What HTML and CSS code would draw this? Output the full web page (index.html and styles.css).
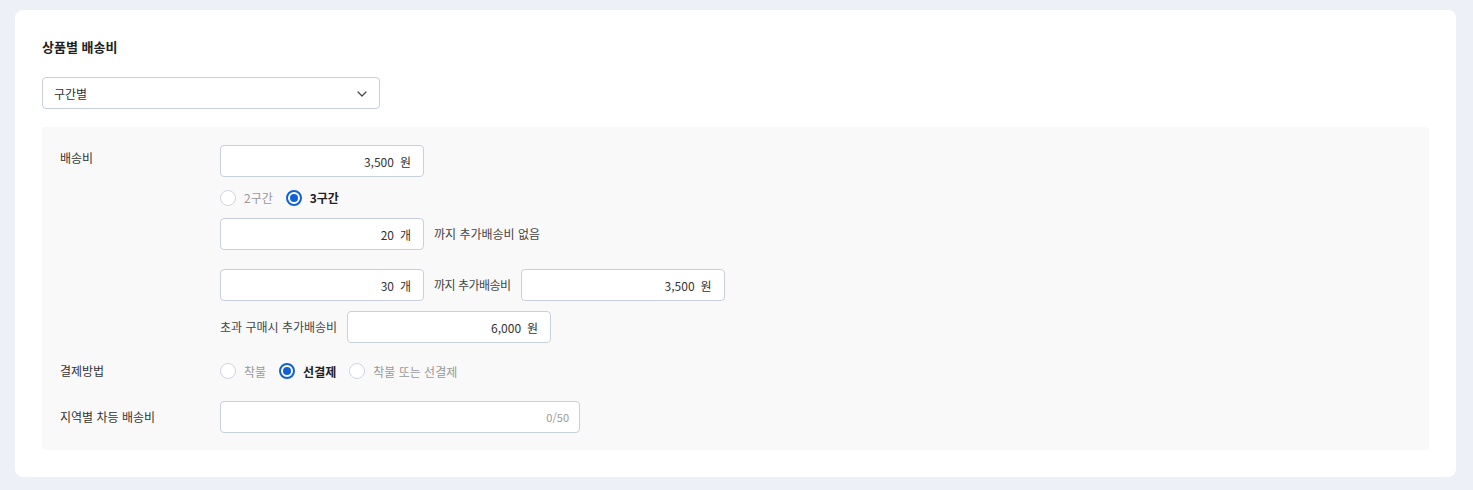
FILE: index.html
```html
<!DOCTYPE html>
<html lang="ko">
<head>
<meta charset="utf-8">
<link rel="stylesheet" href="styles.css">
</head>
<body>
<section class="card">
  <h2 class="title">상품별 배송비</h2>
  <div class="select">
    <span>구간별</span>
    <svg class="chev" width="10" height="6" viewBox="0 0 10 6"><path d="M1 1l4 4 4-4" fill="none" stroke="#444" stroke-width="1.2" stroke-linecap="round" stroke-linejoin="round"/></svg>
  </div>
  <div class="panel">
    <div class="label l1">배송비</div>
    <div class="col">
      <div class="input"><span>3,500</span><span class="unit">원</span></div>
      <div class="radios">
        <label class="radio"><span class="dot"></span><span class="off">2구간</span></label>
        <label class="radio"><span class="dot on"></span><span class="sel">3구간</span></label>
      </div>
      <div class="line">
        <div class="input"><span>20</span><span class="unit">개</span></div>
        <span class="txt">까지 추가배송비 없음</span>
      </div>
      <div class="line gap2">
        <div class="input"><span>30</span><span class="unit">개</span></div>
        <span class="txt tight">까지 추가배송비</span>
        <div class="input"><span>3,500</span><span class="unit">원</span></div>
      </div>
      <div class="line">
        <span class="txt">초과 구매시 추가배송비</span>
        <div class="input"><span>6,000</span><span class="unit">원</span></div>
      </div>
    </div>
    <div class="label l2">결제방법</div>
    <div class="radios pay">
      <label class="radio"><span class="dot"></span><span class="off">착불</span></label>
      <label class="radio"><span class="dot on"></span><span class="sel">선결제</span></label>
      <label class="radio"><span class="dot"></span><span class="off">착불 또는 선결제</span></label>
    </div>
    <div class="label l3">지역별 차등 배송비</div>
    <div class="input wide"><span class="count">0/50</span></div>
  </div>
</section>
</body>
</html>
```
FILE: styles.css
```css
* { box-sizing: border-box; }
html, body { margin: 0; padding: 0; }
body {
  background: #edf0f7;
  font-family: "Noto Sans CJK KR", "Noto Sans", sans-serif;
  color: #333;
  font-size: 12px;
  padding: 10px 17px 13px 15px;
}
.card {
  background: #fff;
  border-radius: 8px;
  padding: 28px 27px 27px 27px;
  height: 467px;
}
.title {
  margin: 0;
  font-size: 13px;
  font-weight: 700;
  color: #222;
  line-height: 18px;
}
.select {
  margin-top: 21px;
  width: 338px;
  height: 32px;
  border: 1px solid #c8d0dd;
  border-radius: 4px;
  display: flex;
  align-items: center;
  justify-content: space-between;
  padding: 0 12px 0 11px;
  color: #333;
  font-size: 12px;
}
.chev { margin-top: 1px; }
.panel {
  margin-top: 18px;
  background: #f9f9fa;
  border-radius: 4px;
  padding: 18px 18px 17px 18px;
  display: grid;
  grid-template-columns: 160px 1fr;
  row-gap: 18px;
}
.label { color: #333; line-height: 18px; }
.l1 { padding-top: 4px; }
.l2 { align-self: center; }
.l3 { align-self: center; margin-top: 2px; }
.col { display: flex; flex-direction: column; align-items: flex-start; gap: 10px; }
.input {
  width: 204px;
  height: 32px;
  border: 1px solid #c8d0dd;
  border-radius: 4px;
  background: #fff;
  display: flex;
  align-items: center;
  justify-content: flex-end;
  padding: 0 12px;
  color: #333;
  font-size: 12px;
}
.unit { margin-left: 6px; }
.wide { width: 360px; padding-right: 10px; margin-top: 2px; }
.count { color: #999; font-size: 11px; }
.line { display: flex; align-items: center; gap: 10px; }
.gap2 { margin-top: 9px; }
.txt { color: #444; line-height: 18px; }
.tight { letter-spacing: -0.5px; }
.radios { display: flex; align-items: center; gap: 13px; height: 21px; }
.radio { display: flex; align-items: center; gap: 8px; }
.dot {
  width: 16px; height: 16px;
  border-radius: 50%;
  border: 1px solid #cfd6e2;
  background: #fff;
  display: inline-block;
  position: relative;
}
.dot.on { border: 2px solid #1160d8; }
.dot.on::after {
  content: "";
  position: absolute;
  left: 2px; top: 2px;
  width: 8px; height: 8px;
  border-radius: 50%;
  background: #1160d8;
}
.off { color: #999; }
.sel { color: #222; font-weight: 700; }
.pay { gap: 13px; height: 20px; }
```
